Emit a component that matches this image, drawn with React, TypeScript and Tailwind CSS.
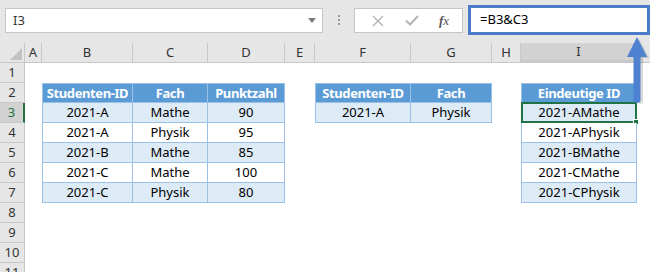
import React from 'react';

const colWidths: Record<string, string> = {
  A: 'w-[17px]',
  B: 'w-[91px]',
  C: 'w-[75px]',
  D: 'w-[77px]',
  E: 'w-[30px]',
  F: 'w-[96px]',
  G: 'w-[81px]',
  H: 'w-[29px]',
  I: 'w-[116px]',
  J: 'w-[13px]',
};
const cols = ['A', 'B', 'C', 'D', 'E', 'F', 'G', 'H', 'I', 'J'];

// cell contents, keyed by column + row
const cells: Record<string, string> = {
  B2: 'Studenten-ID', C2: 'Fach', D2: 'Punktzahl',
  B3: '2021-A', C3: 'Mathe', D3: '90',
  B4: '2021-A', C4: 'Physik', D4: '95',
  B5: '2021-B', C5: 'Mathe', D5: '85',
  B6: '2021-C', C6: 'Mathe', D6: '100',
  B7: '2021-C', C7: 'Physik', D7: '80',
  F2: 'Studenten-ID', G2: 'Fach',
  F3: '2021-A', G3: 'Physik',
  I2: 'Eindeutige ID',
  I3: '2021-AMathe', I4: '2021-APhysik', I5: '2021-BMathe', I6: '2021-CMathe', I7: '2021-CPhysik',
};

const inTable = (c: string, r: number) => {
  if (['B', 'C', 'D'].includes(c)) return r >= 2 && r <= 7;
  if (['F', 'G'].includes(c)) return r >= 2 && r <= 3;
  if (c === 'I') return r >= 2 && r <= 7;
  return false;
};

const Cell = ({ c, r }: { c: string; r: number }) => {
  const key = `${c}${r}`;
  if (!inTable(c, r)) return <div className={`${colWidths[c]} h-full shrink-0 bg-white`} />;
  const first = c === 'B' || c === 'F' || c === 'I';
  const header = r === 2;
  const fill = header
    ? 'bg-[#5b9bd5] text-white font-bold tracking-[-0.4px]'
    : r % 2 === 1
      ? 'bg-[#ddebf7] text-black'
      : 'bg-white text-black';
  return (
    <div
      className={`${colWidths[c]} relative h-full shrink-0 flex items-center justify-center whitespace-nowrap border-r border-b border-[#9bc2e6] ${first ? 'border-l' : ''} ${header ? 'border-t' : ''} ${fill}`}
    >
      <span className="leading-none">{cells[key]}</span>
      {key === 'I3' && (
        <>
          <div className="absolute left-[-1px] top-[-1px] right-[-1px] bottom-[-1px] border-2 border-[#217346]" />
          <div className="absolute right-[-3px] bottom-[-3px] w-[6px] h-[6px] bg-[#217346] border border-white" />
        </>
      )}
    </div>
  );
};

const App = () => {
  const rows = Array.from({ length: 11 }, (_, i) => i + 1);
  return (
    <div className="w-[650px] h-[272px] overflow-hidden relative bg-white" style={{ fontFamily: '"Noto Sans", "Open Sans", sans-serif' }}>
      {/* formula bar */}
      <div className="flex h-[43px] bg-[#e6e6e6]">
        <div className="ml-[5px] mt-[8px] w-[318px] h-[25px] bg-white border border-[#c6c6c6] flex items-center justify-between pl-[7px] pr-[6px]">
          <span className="text-[13px] text-[#333]">I3</span>
          <svg width="8" height="5" viewBox="0 0 8 5"><path d="M0 0 L8 0 L4 5 Z" fill="#7a7a7a" /></svg>
        </div>
        <div className="w-[31px] flex justify-center pt-[15px]">
          <div className="flex flex-col gap-[2px]">
            <span className="w-[2px] h-[2px] bg-[#9a9a9a]" />
            <span className="w-[2px] h-[2px] bg-[#9a9a9a]" />
            <span className="w-[2px] h-[2px] bg-[#9a9a9a]" />
          </div>
        </div>
        <div className="mt-[8px] w-[109px] h-[25px] bg-white border border-[#c6c6c6] flex items-center">
          <svg className="ml-[17px]" width="12" height="12" viewBox="0 0 12 12">
            <path d="M1 1 L11 11 M11 1 L1 11" stroke="#b4b4b4" strokeWidth="1.4" />
          </svg>
          <svg className="ml-[21px]" width="14" height="11" viewBox="0 0 14 11">
            <path d="M1 5.5 L5 9.5 L13 1" stroke="#b4b4b4" strokeWidth="2" fill="none" />
          </svg>
          <span className="ml-[20px] text-[13px] italic text-[#555]" style={{ fontFamily: '"Liberation Serif", serif' }}>
            <span className="font-bold">f</span>x
          </span>
        </div>
        <div className="ml-[5px] mt-[5px] w-[182px] h-[30px] bg-white border-[3px] border-[#4a7cc9] flex items-center pl-[9px]">
          <span className="text-[13px] text-black">=B3&amp;C3</span>
        </div>
      </div>

      {/* column headers */}
      <div className="flex h-[20px] bg-[#e6e6e6] border-b border-[#c8c8c8]">
        <div className="w-[25px] shrink-0 h-full border-r border-[#c8c8c8] flex items-end justify-end p-[2px]">
          <svg width="12" height="12" viewBox="0 0 12 12"><path d="M12 0 L12 12 L0 12 Z" fill="#c2c2c2" /></svg>
        </div>
        {cols.map((c) => (
          <div
            key={c}
            className={`${colWidths[c]} shrink-0 h-full flex items-center justify-center text-[13px] ${c === 'I' ? 'bg-[#d2d2d2] border-b-2 border-[#217346] text-[#333]' : 'text-[#333]'} ${c !== 'J' ? 'border-r border-[#c8c8c8]' : ''}`}
          >
            {c !== 'J' ? c : ''}
          </div>
        ))}
      </div>

      {/* sheet rows */}
      {rows.map((r) => (
        <div key={r} className="flex h-[20px] text-[13px]">
          <div
            className={`w-[25px] shrink-0 h-full flex items-center justify-center text-[13px] border-b border-[#c8c8c8] ${r === 3 ? 'bg-[#d2d2d2] border-r-2 border-r-[#217346] text-[#217346]' : 'bg-[#e6e6e6] border-r border-r-[#c8c8c8] text-[#333]'}`}
          >
            {r}
          </div>
          {cols.map((c) => (
            <Cell key={c} c={c} r={r} />
          ))}
        </div>
      ))}

      {/* callout arrow from the formula box down to I3 */}
      <svg className="absolute left-[624px] top-[35px]" width="26" height="72" viewBox="0 0 26 72">
        <path d="M15 4 L25 23 L19 23 L19 66 Q19 69 16 69 Q14 69 14 66 Z" fill="#000" opacity="0.15" />
        <path d="M13 2 L23 22 L16.5 22 L16.5 65 Q16.5 68 13 68 Q9.5 68 9.5 65 L9.5 22 L3 22 Z" fill="#4f81d1" />
      </svg>
    </div>
  );
};

export default App;
